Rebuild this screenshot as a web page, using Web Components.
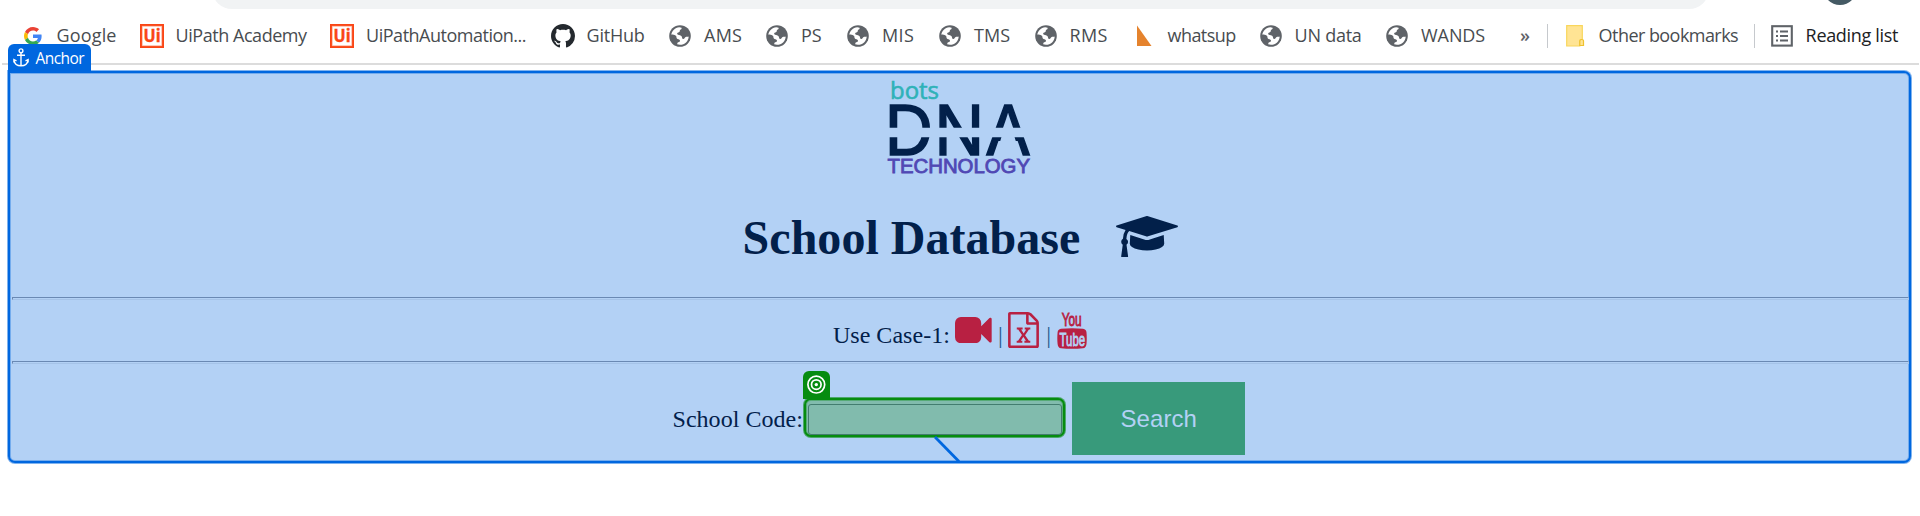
<!DOCTYPE html>
<html lang="en">
<head>
<meta charset="utf-8">
<title>School Database</title>
<style>
  html, body { margin: 0; background: #fff; }
  body { width: 1920px; height: 516px; overflow: hidden; }
</style>
</head>
<body>
<school-page></school-page>

<script>
const ICONS = {
  google: `<svg width="18" height="18" viewBox="0 0 48 48"><path fill="#EA4335" d="M24 9.5c3.54 0 6.71 1.22 9.21 3.6l6.85-6.85C35.9 2.38 30.47 0 24 0 14.62 0 6.51 5.38 2.56 13.22l7.98 6.19C12.43 13.72 17.74 9.5 24 9.5z"/><path fill="#4285F4" d="M46.98 24.55c0-1.57-.15-3.09-.38-4.55H24v9.02h12.94c-.58 2.96-2.26 5.48-4.78 7.18l7.73 6c4.51-4.18 7.09-10.36 7.09-17.65z"/><path fill="#FBBC05" d="M10.53 28.59c-.48-1.45-.76-2.99-.76-4.59s.27-3.14.76-4.59l-7.98-6.19C.92 16.46 0 20.12 0 24c0 3.88.92 7.54 2.56 10.78l7.97-6.19z"/><path fill="#34A853" d="M24 48c6.48 0 11.93-2.13 15.89-5.81l-7.73-6c-2.15 1.45-4.92 2.3-8.16 2.3-6.26 0-11.57-4.22-13.47-9.91l-7.98 6.19C6.51 42.62 14.62 48 24 48z"/></svg>`,
  uipath: `<svg width="24" height="24" viewBox="0 0 24 24"><rect width="24" height="24" fill="#fa4616"/><rect x="2.2" y="2.2" width="19.6" height="19.6" fill="#fff" stroke="#fdb9a4" stroke-width=".6"/><text x="3.6" y="18" font-family="Open Sans, sans-serif" font-weight="700" font-size="17" textLength="17" lengthAdjust="spacingAndGlyphs" fill="#fa4616" stroke="#fa4616" stroke-width=".4">Ui</text></svg>`,
  github: `<svg width="24" height="24" viewBox="0 0 16 16"><path fill="#24292e" d="M8 0C3.58 0 0 3.58 0 8c0 3.54 2.29 6.53 5.47 7.59.4.07.55-.17.55-.38 0-.19-.01-.82-.01-1.49-2.01.37-2.53-.49-2.69-.94-.09-.23-.48-.94-.82-1.13-.28-.15-.68-.52-.01-.53.63-.01 1.08.58 1.23.82.72 1.21 1.87.87 2.33.66.07-.52.28-.87.51-1.07-1.78-.2-3.64-.89-3.64-3.95 0-.87.31-1.59.82-2.15-.08-.2-.36-1.02.08-2.12 0 0 .67-.21 2.2.82.64-.18 1.32-.27 2-.27.68 0 1.36.09 2 .27 1.53-1.04 2.2-.82 2.2-.82.44 1.1.16 1.92.08 2.12.51.56.82 1.27.82 2.15 0 3.07-1.87 3.75-3.65 3.95.29.25.54.73.54 1.48 0 1.07-.01 1.93-.01 2.2 0 .21.15.46.55.38A8.013 8.013 0 0016 8c0-4.42-3.58-8-8-8z"/></svg>`,
  globe: `<svg width="22" height="22" viewBox="0 0 22 22"><circle cx="11" cy="11" r="10.8" fill="#5f6368"/><path fill="#fff" d="M2.300 9.600C2.900 5.800 6 2.800 10.200 2.300L12.600 2.700C13 4.100 11.800 4.300 11.100 4.900C10.400 5.600 11.200 6.400 10.100 7.100C9.200 7.800 8 7.700 8.200 8.900C8.600 10.200 11.600 9.800 12.600 11.200C13.300 12.400 12.900 13.700 14.100 14C15.700 14.200 15.500 12.200 17.200 11.800C18.200 11.600 19 11.900 19.700 11.400C19.500 16.200 15.800 19.800 11 19.800C10 19.800 9 19.600 8.100 19.300L8.500 17.800C9.300 17.200 11.200 17.200 11 15.600C10.700 14 8.400 14.600 7.700 13.200C7.200 12.100 7.800 11.200 6.500 10.400C5.500 9.900 4 10 2.300 9.600Z"/></svg>`,
  triangle: `<svg width="15" height="22" viewBox="0 0 15 22"><path fill="#e5832d" d="M0 .5L14.500 21H0Z"/></svg>`,
  folder: `<svg width="19" height="22" viewBox="0 0 19 22"><path fill="#ffe494" stroke="#f9d65c" stroke-width="1.2" d="M.7.7H16.300V14.500H15Q13.800 14.500 13.800 16V21H.7Z"/><path fill="#ffe494" stroke="#efc22f" stroke-width="1.2" d="M13.800 20.500V16Q13.800 14.500 15.700 14.500T17.500 16V20.500Z"/></svg>`,
  list: `<svg width="22" height="22" viewBox="0 0 22 22" fill="none" stroke="#5f6368"><rect x="1.200" y="1.200" width="19.600" height="19.400" stroke-width="2.100"/><path stroke-width="2" d="M5 6.400H7M5 11H7M5 15.600H7M9 6.400H17M9 11H17M9 15.600H17"/></svg>`
};

const element = (name, markup, setup) => {
  const template = document.createElement("template");
  template.innerHTML = markup;
  customElements.define(name, class extends HTMLElement {
    connectedCallback() {
      if (this.shadowRoot) return;
      this.attachShadow({ mode: "open" }).append(template.content.cloneNode(true));
      if (setup) setup(this, this.shadowRoot);
    }
  });
};

/* Text whose letter spacing adapts to the width given in "fit". */
element("fit-text", `
  <style>:host{display:block;white-space:nowrap} span{display:inline-block}</style>
  <span><slot></slot></span>`, (host, root) => {
  const span = root.querySelector("span");
  const n = host.textContent.length;
  const gap = (parseFloat(host.getAttribute("fit")) - span.getBoundingClientRect().width) / n;
  span.style.letterSpacing = gap + "px";
});

element("bookmark-item", `
  <style>
    :host{display:flex;align-items:center;flex:none;height:26px;color:#484c50;font:400 18px/26px "Open Sans","Noto Sans",sans-serif}
    .icon{display:block;flex:none} svg{display:block}
    fit-text{margin:-2px 0 0 .6px}
  </style>
  <span class="icon"></span>`, (host, root) => {
  const icon = root.querySelector(".icon");
  icon.innerHTML = ICONS[host.getAttribute("icon")];
  icon.style.width = host.getAttribute("indent") + "px";
  host.style.width = host.getAttribute("span") + "px";
  const label = document.createElement("fit-text");
  label.setAttribute("fit", host.getAttribute("label"));
  label.textContent = host.textContent;
  root.append(label);
});

element("browser-bar", `
  <style>
    :host{display:block;height:66px}
    .top{display:flex;height:9px;overflow:hidden;align-items:flex-end}
    .omni{width:1497px;height:40px;margin-left:211.500px;border-radius:20px;background:#f1f3f4;flex:none}
    .avatar{width:34px;height:34px;border-radius:50%;background:#455a64;margin:0 0 4px 114px;flex:none}
    .marks{display:flex;align-items:center;height:54px;padding-left:24px}
    .more{width:26.500px;margin-top:-3px;font:600 18px/26px "Open Sans",sans-serif;color:#5f6368}
    i{width:1px;height:24px;background:#c6c9cd;margin-right:18px;flex:none}
    i+bookmark-item+i{margin-right:16px}
    .rule{height:2px;background:#dcdcdc;margin:0 1px 0 2px}
  </style>
  <div class="top"><div class="omni"></div><div class="avatar"></div></div>
  <div class="marks">
    <bookmark-item icon="google" span="116" indent="32" label="60">Google</bookmark-item>
    <bookmark-item icon="uipath" span="190" indent="35" label="131">UiPath Academy</bookmark-item>
    <bookmark-item icon="uipath" span="221" indent="35.5" label="160">UiPathAutomation...</bookmark-item>
    <bookmark-item icon="github" span="118" indent="35" label="58">GitHub</bookmark-item>
    <bookmark-item icon="globe" span="97" indent="34.5" label="38">AMS</bookmark-item>
    <bookmark-item icon="globe" span="81" indent="34.5" label="20.5">PS</bookmark-item>
    <bookmark-item icon="globe" span="92" indent="34.5" label="32">MIS</bookmark-item>
    <bookmark-item icon="globe" span="96" indent="34.5" label="36">TMS</bookmark-item>
    <bookmark-item icon="globe" span="102" indent="34" label="38">RMS</bookmark-item>
    <bookmark-item icon="triangle" span="123" indent="30" label="68">whatsup</bookmark-item>
    <bookmark-item icon="globe" span="126" indent="34" label="67">UN data</bookmark-item>
    <bookmark-item icon="globe" span="134" indent="34.5" label="64">WANDS</bookmark-item>
    <span class="more">»</span><i></i>
    <bookmark-item icon="folder" span="188" indent="32.5" label="139.5">Other bookmarks</bookmark-item><i></i>
    <bookmark-item icon="list" span="130" indent="34.5" label="92.5" style="color:#202124">Reading list</bookmark-item>
  </div>
  <div class="rule"></div>`);

element("anchor-tag", `
  <style>
    :host{position:absolute;left:-2.500px;top:-29.500px;width:83.500px;height:28.500px;box-sizing:border-box;display:flex;align-items:center;padding-left:5.500px;gap:6.500px;border-radius:6px 6px 0 0;background:#0067df;color:#fff;font:400 15.500px/24px "Open Sans",sans-serif}
    svg{display:block;flex:none}
  </style>
  <svg width="16" height="19" viewBox="0 0 16 19" fill="none" stroke="#fff" stroke-width="1.400"><circle cx="8" cy="2.800" r="1.900"/><path d="M8 4.700V17.600M4 7.200H12M.9 14.500V11.700L3.500 12.900M15.100 14.500V11.700L12.500 12.900M1 12.300C1.500 15.700 4.300 17.800 8 17.800S14.500 15.700 15 12.300"/></svg>
  <fit-text fit="48.5">Anchor</fit-text>`);

element("brand-logo", `
  <style>:host{display:block;height:120px;padding-left:870px} svg{display:block}</style>
  <svg width="160" height="112" viewBox="880 73 160 112">
    <text x="890" y="99.400" font-family="Open Sans, sans-serif" font-size="24" textLength="49" lengthAdjust="spacingAndGlyphs" fill="#2fb2b8" stroke="#2fb2b8" stroke-width=".6">bots</text>
    <g font-family="Liberation Sans, sans-serif" font-size="71.500" fill="#02204a" stroke="#02204a" stroke-width="1.600">
      <text x="885" y="155" textLength="47.500" lengthAdjust="spacingAndGlyphs">D</text>
      <text x="934.500" y="155" textLength="49.500" lengthAdjust="spacingAndGlyphs">N</text>
      <text x="986.500" y="155" textLength="43" lengthAdjust="spacingAndGlyphs">A</text>
    </g>
    <path fill="#b3d1f5" d="M884 127.800H1036V137.300H884ZM1001.500 137H1014.500L1017.500 146.500H998.500Z"/>
    <text x="887.500" y="173.300" font-family="Liberation Sans, sans-serif" font-size="19.500" textLength="142.500" lengthAdjust="spacingAndGlyphs" fill="#5048b4" stroke="#5048b4" stroke-width=".8">TECHNOLOGY</text>
  </svg>`);

element("page-title", `
  <style>
    :host{display:flex;height:104px;padding-left:732.600px;color:#02204a}
    fit-text{margin-top:17px;font:700 48px/56px "Liberation Serif",serif;width:373.100px}
    svg{display:block;margin-top:23px}
  </style>
  <fit-text fit="337.7">School Database</fit-text>
  <svg width="62" height="41.300" viewBox="0 128 2304 1536"><path fill="#02204a" d="M1774 836l18 316q4 69-82 128t-235 93.500-323 34.500-323-34.500-235-93.500-82-128l18-316 574 181q22 7 48 7t48-7zm530-324q0 23-22 31l-1120 352q-4 1-10 1t-10-1l-652-206q-43 34-71 111.500t-34 178.500q63 36 63 109 0 69-58 107l58 433q2 14-8 25-9 11-24 11h-192q-15 0-24-11-10-11-8-25l58-433q-58-38-58-107 0-73 65-111 11-207 98-330l-333-104q-22-8-22-31t22-31l1120-352q4-1 10-1t10 1l1120 352q22 8 22 31z"/></svg>`);

element("rule-line", `
  <style>:host{display:block;height:1px;margin:0 0 0 2px;border:1px solid #6a89b3;border-bottom-color:#a5c3e8;border-right-color:#a5c3e8}</style>`);

element("use-case", `
  <style>
    :host{display:flex;height:61px;padding-left:822.900px;color:#02204a;font:400 24px/28px "Liberation Serif",serif}
    svg{display:block;flex:none}
    .label{margin-top:21px;width:122.400px}
    .bar{width:4.800px;margin-top:21px;flex:none;color:#1f5c8c}
  </style>
  <fit-text class="label" fit="117">Use Case-1:</fit-text>
  <svg width="36.700" height="26.200" viewBox="0 256 1792 1280" style="margin-top:17px"><path fill="#b82042" d="M1792 352v1088q0 42-39 59-13 5-25 5-27 0-45-19l-403-403v166q0 119-84.500 203.500t-203.500 84.500h-704q-119 0-203.500-84.500t-84.500-203.500v-704q0-119 84.500-203.500t203.500-84.500h704q119 0 203.500 84.500t84.500 203.500v165l403-402q18-19 45-19 12 0 25 5 39 17 39 59z"/></svg>
  <span class="bar" style="margin-left:6px">|</span>
  <svg width="31" height="36" viewBox="128 0 1536 1792" style="margin:12px 6.900px 0 5.500px"><path fill="#b82042" d="M1596 380q28 28 48 76t20 88v1152q0 40-28 68t-68 28h-1344q-40 0-68-28t-28-68v-1600q0-40 28-68t68-28h896q40 0 88 20t76 48zm-444-244v376h376q-10-29-22-41l-313-313q-12-12-41-22zm384 1528v-1024h-416q-40 0-68-28t-28-68v-416h-768v1536h1280zm-979-234v106h281v-106h-75l103-161q5-7 10-16.500t7.500-13.500 3.500-4h2q1 4 5 10 2 4 4.500 7.500t6 8 6.500 8.500l107 161h-76v106h291v-106h-68l-192-273 195-282h67v-107h-279v107h74l-103 159q-4 7-10 16.500t-9 13.500l-2 3h-2q-1-4-5-10-6-11-17-23l-106-159h76v-107h-290v107h68l189 272-194 283h-68z"/></svg>
  <span class="bar">|</span>
  <svg width="30" height="37" viewBox="0 0 30 37" style="margin:11.500px 0 0 6px" font-family="Liberation Sans, sans-serif">
    <text x="4.700" y="14.400" font-size="18.500" textLength="20" lengthAdjust="spacingAndGlyphs" fill="#b82042" stroke="#b82042" stroke-width=".9">You</text>
    <path fill="#b82042" d="M4 16.700Q15 15.700 26 16.700Q29.300 17.200 29.500 20.500Q30 26 29.500 32Q29 36 26 36.300Q15 37.300 4 36.300Q1 36 .6 32Q0 26 .6 20.500Q.8 17.200 4 16.700Z"/>
    <text x="2.600" y="33.600" font-size="18.500" textLength="25.500" lengthAdjust="spacingAndGlyphs" fill="#b3d1f5" stroke="#b3d1f5" stroke-width=".9">Tube</text>
  </svg>`);

element("target-field", `
  <style>
    :host{display:block;position:relative;box-sizing:border-box;width:261px;height:39px;border:2px solid #068c10;border-radius:7px;background:#81bbad;box-shadow:0 0 0 1px rgba(6,140,16,.6),inset 0 0 0 1px rgba(6,140,16,.35);padding:3.500px 1.500px 1px 1.500px}
    .box{box-sizing:border-box;height:31px;border:1px solid #437d70;border-radius:3px}
    .tag{position:absolute;left:-3px;top:-29.500px;width:27px;height:28px;border-radius:6px 6px 0 0;background:#068c10}
    svg{display:block}
    .link{position:absolute;left:125px;top:36px}
  </style>
  <div class="box"></div>
  <div class="tag"><svg width="27" height="28" viewBox="0 0 27 28" fill="none" stroke="#fff" stroke-width="1.700"><circle cx="13.300" cy="13.600" r="8.400"/><circle cx="13.300" cy="13.600" r="4.800"/><circle cx="13.300" cy="13.600" r="1.700" fill="#fff" stroke="none"/></svg></div>
  <svg class="link" width="32" height="28" viewBox="0 0 32 28"><path stroke="#0067df" stroke-width="2.800" d="M4 1L28 25.500"/></svg>`);

element("search-form", `
  <style>
    :host{display:flex;height:97px;padding-left:662.500px;color:#02204a;font:400 24px/28px "Liberation Serif",serif}
    .label{margin-top:41px;width:131.500px}
    target-field{margin-top:34px}
    button{all:unset;box-sizing:border-box;width:173px;height:73px;margin:18px 0 0 7px;padding-left:48.500px;background:#389a7b;color:#b3d1f5;font:400 24px/71px "Liberation Sans",sans-serif}
  </style>
  <fit-text class="label" fit="130.5">School Code:</fit-text>
  <target-field></target-field>
  <button><fit-text fit="76.5">Search</fit-text></button>`);

element("school-page", `
  <style>
    :host{display:block}
    .panel{position:relative;box-sizing:border-box;width:1903px;height:392px;margin:5px 0 0 8px;border:2px solid #0067df;border-radius:0 7px 7px 7px;background:#b3d1f5;box-shadow:0 0 0 1px rgba(0,103,223,.5),inset 0 0 0 1px rgba(0,103,223,.35)}
  </style>
  <browser-bar></browser-bar>
  <div class="panel">
    <anchor-tag></anchor-tag>
    <brand-logo></brand-logo>
    <page-title></page-title>
    <rule-line></rule-line>
    <use-case></use-case>
    <rule-line></rule-line>
    <search-form></search-form>
  </div>`);
</script>
</body>
</html>
